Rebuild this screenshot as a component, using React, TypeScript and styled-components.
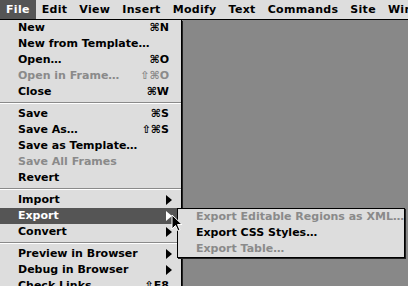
import React from "react";
import styled, { createGlobalStyle } from "styled-components";

const Global = createGlobalStyle`
  html, body { margin: 0; padding: 0; background: #888888; }
  body { font-family: "DejaVu Sans", Verdana, sans-serif; }
`;

const Screen = styled.div`
  position: relative;
  width: 408px;
  height: 286px;
  overflow: hidden;
  background: #888888;
  display: flex;
  flex-direction: column;
  font-family: "DejaVu Sans", Verdana, sans-serif;
  font-weight: bold;
  font-size: 11px;
`;

const MenuBar = styled.div`
  display: flex;
  height: 19px;
  background: #dddddd;
  border-bottom: 1px solid #000;
  white-space: nowrap;
  letter-spacing: 0.3px;
`;

const Title = styled.div<{ $active?: boolean }>`
  height: 19px;
  line-height: 19px;
  padding: 0 6px 0 6px;
  background: ${(p) => (p.$active ? "#555555" : "transparent")};
  color: ${(p) => (p.$active ? "#ffffff" : "#000000")};
`;

const Desktop = styled.div`
  flex: 1;
  background: #888888;
`;

const Menu = styled.div<{ $left: number; $top: number; $width: number }>`
  position: absolute;
  left: ${(p) => p.$left}px;
  top: ${(p) => p.$top}px;
  width: ${(p) => p.$width}px;
  background: #dddddd;
  border: 1px solid #000;
  border-top: none;
  box-shadow: 1px 1px 0 #222;
  display: flex;
  flex-direction: column;
`;

const SubMenu = styled(Menu)`
  border-top: 1px solid #000;
`;

const Item = styled.div<{ $disabled?: boolean; $hi?: boolean; $pad?: number }>`
  height: 16px;
  line-height: 16px;
  display: flex;
  align-items: center;
  padding-left: ${(p) => p.$pad ?? 18}px;
  padding-right: 12px;
  white-space: nowrap;
  background: ${(p) => (p.$hi ? "#555555" : "transparent")};
  color: ${(p) => (p.$hi ? "#ffffff" : p.$disabled ? "#8a8a8a" : "#000000")};
`;

const Label = styled.span`
  flex: 1;
`;

const Shortcut = styled.span`
  font-weight: bold;
`;

const Separator = styled.div`
  height: 6px;
  display: flex;
  flex-direction: column;
  justify-content: center;
  &::before {
    content: "";
    display: block;
    height: 1px;
    background: #8a8a8a;
  }
  &::after {
    content: "";
    display: block;
    height: 1px;
    background: #ffffff;
  }
`;

const Arrow = styled.span<{ $hi?: boolean }>`
  width: 0;
  height: 0;
  border-top: 5px solid transparent;
  border-bottom: 5px solid transparent;
  border-left: 6px solid ${(p) => (p.$hi ? "#ffffff" : "#000000")};
  margin-right: -3px;
`;

const Cursor = styled.svg`
  position: absolute;
  left: 171px;
  top: 214px;
`;

type Entry =
  | { sep: true }
  | { label: string; key?: string; disabled?: boolean; sub?: boolean; hi?: boolean };

const fileItems: Entry[] = [
  { label: "New", key: "⌘N" },
  { label: "New from Template…" },
  { label: "Open…", key: "⌘O" },
  { label: "Open in Frame…", key: "⇧⌘O", disabled: true },
  { label: "Close", key: "⌘W" },
  { sep: true },
  { label: "Save", key: "⌘S" },
  { label: "Save As…", key: "⇧⌘S" },
  { label: "Save as Template…" },
  { label: "Save All Frames", disabled: true },
  { label: "Revert" },
  { sep: true },
  { label: "Import", sub: true },
  { label: "Export", sub: true, hi: true },
  { label: "Convert", sub: true },
  { sep: true },
  { label: "Preview in Browser", sub: true },
  { label: "Debug in Browser", sub: true },
  { label: "Check Links", key: "⇧F8" },
];

const titles = ["File", "Edit", "View", "Insert", "Modify", "Text", "Commands", "Site", "Window"];

export default function App() {
  return (
    <Screen>
      <Global />
      <MenuBar>
        {titles.map((t, i) => (
          <Title key={t} $active={i === 0}>
            {t}
          </Title>
        ))}
      </MenuBar>
      <Desktop />
      <Menu $left={-1} $top={20} $width={181}>
        {fileItems.map((e, i) =>
          "sep" in e ? (
            <Separator key={i} />
          ) : (
            <Item key={i} $disabled={e.disabled} $hi={e.hi}>
              <Label>{e.label}</Label>
              {e.key && <Shortcut>{e.key}</Shortcut>}
              {e.sub && <Arrow $hi={e.hi} />}
            </Item>
          )
        )}
      </Menu>
      <SubMenu $left={177} $top={208} $width={226}>
        <Item $disabled $pad={18}>
          <Label>Export Editable Regions as XML…</Label>
        </Item>
        <Item $pad={18}>
          <Label>Export CSS Styles…</Label>
        </Item>
        <Item $disabled $pad={18}>
          <Label>Export Table…</Label>
        </Item>
      </SubMenu>
      <Cursor width="12" height="19" viewBox="0 0 12 19">
        <path
          d="M1 1 L1 15 L4.5 11.5 L7 17 L9 16 L6.5 10.5 L11 10.5 Z"
          fill="#000"
          stroke="#fff"
          strokeWidth="1"
          strokeLinejoin="miter"
        />
      </Cursor>
    </Screen>
  );
}
